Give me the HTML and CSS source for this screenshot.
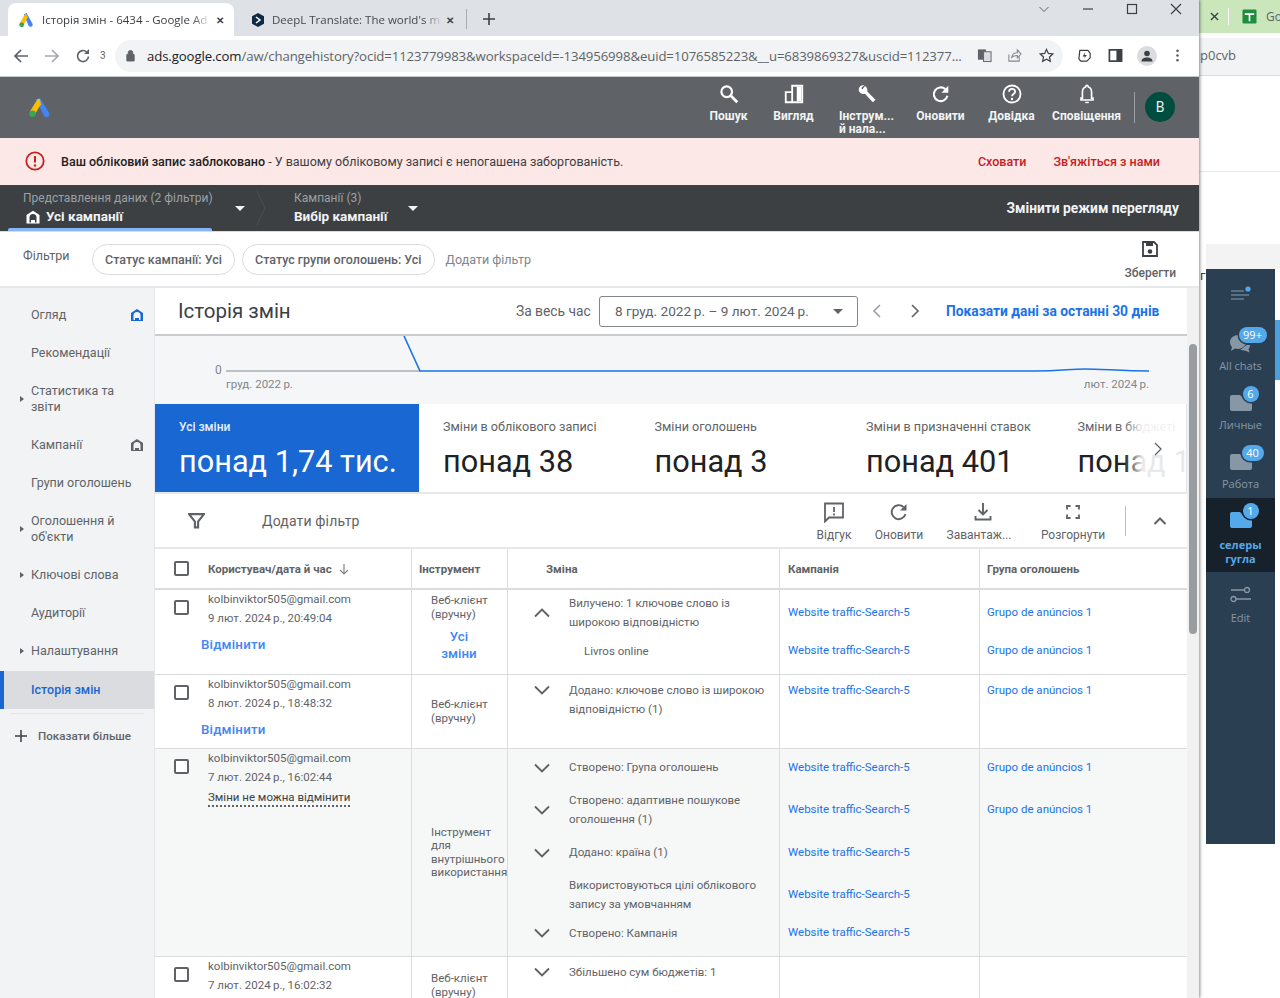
FILE: index.html
```html
<!DOCTYPE html>
<html lang="uk">
<head>
<meta charset="utf-8">
<title>Історія змін</title>
<link rel="stylesheet" href="styles.css">
</head>
<body>
<div class="browser">
  <div class="tabstrip">
    <div class="tab active-tab">
      <svg class="fav" viewBox="0 0 16 16"><path d="M5.700 2.200 8.600 1l5.900 10.700c.6 1.200-.1 2.600-1.300 3-1 .3-2-.1-2.600-1z" fill="#4285f4"/><path d="M7.200 2 1.900 11l3.600 2L9.800 5.400 8.700 2.500z" fill="#fbbc04"/><circle cx="3.700" cy="12.800" r="2.400" fill="#34a853"/></svg>
      <span class="tab-title">Історія змін - 6434 - Google Ad</span>
      <span class="tab-x">✕</span>
    </div>
    <div class="tab tab-two">
      <svg class="fav" viewBox="0 0 16 16"><path d="M8 1 14 4.300V11.700L8 15 2 11.700V4.300z" fill="#0f2b46"/><path d="M6 5l4 3-4 3" fill="none" stroke="#fff" stroke-width="1.500"/></svg>
      <span class="tab-title">DeepL Translate: The world's mo</span>
      <span class="tab-x">✕</span>
    </div>
    <span class="tab-sep"></span>
    <svg class="newtab" viewBox="0 0 14 14"><path d="M7 1v12M1 7h12" stroke="#3c4043" stroke-width="1.600"/></svg>
    <div class="winctl">
      <svg viewBox="0 0 12 12"><path d="M1.500 4 6 8.500 10.500 4" fill="none" stroke="#5f6368" stroke-width="1"/></svg>
      <svg viewBox="0 0 12 12"><path d="M1 6h10" stroke="#3c4043" stroke-width="1.200"/></svg>
      <svg viewBox="0 0 12 12"><rect x="1.500" y="1.500" width="9" height="9" fill="none" stroke="#3c4043" stroke-width="1.200"/></svg>
      <svg viewBox="0 0 12 12"><path d="M1 1l10 10M11 1 1 11" stroke="#3c4043" stroke-width="1.200"/></svg>
    </div>
  </div>
  <div class="omnirow">
    <svg class="nav-ic" viewBox="0 0 16 16"><path d="M15 8H2M8 2 2 8l6 6" fill="none" stroke="#5f6368" stroke-width="1.700"/></svg>
    <svg class="nav-ic" viewBox="0 0 16 16"><path d="M1 8h13M8 2l6 6-6 6" fill="none" stroke="#a5a8ac" stroke-width="1.700"/></svg>
    <svg class="nav-ic" viewBox="0 0 16 16"><path d="M13.500 8.500A5.500 5.500 0 1 1 11.800 4" fill="none" stroke="#5f6368" stroke-width="1.700"/><path d="M14 1v5H9z" fill="#5f6368"/></svg>
    <span class="reload-count">3</span>
    <div class="omnibox">
      <svg class="lock" viewBox="0 0 12 14"><path d="M2 6h8v7H2zM3.500 6V4a2.500 2.500 0 0 1 5 0v2" fill="#5f6368" stroke="#5f6368"/></svg>
      <span class="url"><b>ads.google.com</b>/aw/changehistory?ocid=1123779983&amp;workspaceId=-134956998&amp;euid=1076585223&amp;__u=6839869327&amp;uscid=112377...</span>
      <svg class="omni-ic" viewBox="0 0 16 16"><rect x="1" y="1.500" width="8.500" height="11" fill="#5f6368"/><rect x="7" y="4" width="8" height="10.500" fill="#dadce0" stroke="#5f6368"/></svg>
      <svg class="omni-ic" viewBox="0 0 16 16"><path d="M2 7v7h11V9M5 10c.5-3.500 3-5 6-5V2l4 4.500-4 4V8c-2.500 0-4.500.5-6 2z" fill="none" stroke="#80868b" stroke-width="1.100"/></svg>
      <svg class="omni-ic star" viewBox="0 0 16 16"><path d="m8 1.500 2 4.300 4.700.6-3.500 3.200.9 4.700L8 12l-4.100 2.300.9-4.700L1.300 6.400 6 5.800z" fill="none" stroke="#3c4043" stroke-width="1.300"/></svg>
    </div>
    <div class="omni-right">
      <svg class="omni-ic" viewBox="0 0 16 16"><path d="M3 2.500h8.500l2.500 3v5l-3.500 3.500H4L2 11.500z" fill="none" stroke="#3c4043" stroke-width="1.300"/><path d="M9 4 6 9h2.500L7 12l3.500-4.500H8z" fill="#3c4043"/></svg>
      <svg class="omni-ic" viewBox="0 0 16 16"><rect x="1.500" y="2" width="13" height="12" fill="none" stroke="#3c4043" stroke-width="1.800"/><rect x="9" y="2" width="5.500" height="12" fill="#3c4043"/></svg>
      <span class="profile"><svg viewBox="0 0 16 16"><circle cx="8" cy="5.500" r="2.800" fill="#3c4043"/><path d="M2.500 13.500c0-3 2.500-4 5.500-4s5.500 1 5.500 4z" fill="#3c4043"/></svg></span>
      <svg class="omni-ic" viewBox="0 0 16 16"><circle cx="8" cy="3" r="1.400" fill="#5f6368"/><circle cx="8" cy="8" r="1.400" fill="#5f6368"/><circle cx="8" cy="13" r="1.400" fill="#5f6368"/></svg>
    </div>
  </div>

  <header class="adsbar">
    <svg class="ads-logo" viewBox="0 0 24 22"><path d="M8 2.500 12.500 1l9.500 15.500c.9 1.800.2 3.800-1.600 4.500-1.500.5-3-.1-3.800-1.500z" fill="#4285f4"/><path d="M10 2 1.800 15.500l5 3L13.600 7.500 12.300 2z" fill="#fbbc04"/><circle cx="4.700" cy="17.500" r="3.400" fill="#34a853"/></svg>
    <nav class="ads-actions">
      <div class="act w-search"><svg viewBox="0 0 24 24"><circle cx="9.500" cy="9.500" r="5.800" fill="none" stroke="#fff" stroke-width="2.400"/><path d="m14 14 7 7" stroke="#fff" stroke-width="3"/></svg><span>Пошук</span></div>
      <div class="act w-view"><svg viewBox="0 0 24 24"><path d="M3 10h7V3h11v18H3zM10 10v11" fill="none" stroke="#fff" stroke-width="2"/><path d="M15 4h5v16h-5z" fill="#fff"/></svg><span>Вигляд</span></div>
      <div class="act w-tools"><svg viewBox="0 0 24 24"><path d="M9 2.500c-3-.8-6 1.500-6 4.500 0 1 .2 1.600.5 2.300 1.300 2.500 4 3.300 6.300 2.300l8.500 9.500 3-2.800-9-9c.6-2.200-.2-4.800-2.500-6L7 7.200 5.800 5.500z" fill="#fff"/></svg><span>Інструм... й нала...</span></div>
      <div class="act w-refresh"><svg viewBox="0 0 24 24"><path d="M19 14a7.500 7.500 0 1 1-2.300-7.300" fill="none" stroke="#fff" stroke-width="2.300"/><path d="M20 3v7.500h-7.500z" fill="#fff"/></svg><span>Оновити</span></div>
      <div class="act w-help"><svg viewBox="0 0 24 24"><circle cx="12" cy="12" r="9.300" fill="none" stroke="#fff" stroke-width="2"/><path d="M8.800 9.500c0-4.200 6.600-4.200 6.600 0 0 2.500-3.400 2.600-3.400 5" fill="none" stroke="#fff" stroke-width="2"/><circle cx="12" cy="17.500" r="1.300" fill="#fff"/></svg><span>Довідка</span></div>
      <div class="act w-bell"><svg viewBox="0 0 24 24"><path d="M12 2.500c-.8 0-1.300.6-1.300 1.500C8 5 7 7 7 10v6.500H5.500v2h13v-2H17V10c0-3-1-5-3.700-6 0-.9-.5-1.500-1.300-1.500z" fill="none" stroke="#fff" stroke-width="1.800"/><path d="M10 20.500h4v1.500h-4z" fill="#fff"/></svg><span>Сповіщення</span></div>
      <span class="act-sep"></span>
      <span class="avatar">B</span>
    </nav>
  </header>

  <div class="banner">
    <svg class="alert" viewBox="0 0 20 20"><circle cx="10" cy="10" r="8.700" fill="none" stroke="#c5221f" stroke-width="1.800"/><path d="M10 5v6.500" stroke="#c5221f" stroke-width="2"/><circle cx="10" cy="14.500" r="1.200" fill="#c5221f"/></svg>
    <span class="banner-text"><b>Ваш обліковий запис заблоковано</b> - У вашому обліковому записі є непогашена заборгованість.</span>
    <a class="banner-link hide">Сховати</a>
    <a class="banner-link">Зв'яжіться з нами</a>
  </div>

  <div class="scopebar">
    <div class="scope scope-first">
      <div class="scope-txt">
        <small>Представлення даних (2 фільтри)</small>
        <strong><svg class="home" viewBox="0 0 14 14"><path d="M7 .8 13.500 5v8.500H.5V5z" fill="#fff"/><path d="M3.500 12.500V7.500a3.500 3.500 0 0 1 7 0v5z" fill="#3c4043"/><path d="M5 13h4v-3H5z" fill="#fff"/></svg>Усі кампанії</strong>
      </div>
      <i class="tri"></i>
    </div>
    <svg class="crumb" viewBox="0 0 10 46"><path d="M1 6l8 17-8 17" fill="none" stroke="#4d5156"/></svg>
    <div class="scope scope-second">
      <div class="scope-txt">
        <small>Кампанії (3)</small>
        <strong>Вибір кампанії</strong>
      </div>
      <i class="tri"></i>
    </div>
    <span class="scope-mode">Змінити режим перегляду</span>
  </div>

  <div class="filterbar">
    <span class="filter-label">Фільтри</span>
    <span class="chip">Статус кампанії: Усі</span>
    <span class="chip">Статус групи оголошень: Усі</span>
    <span class="add-filter">Додати фільтр</span>
    <div class="save">
      <svg viewBox="0 0 18 18"><path d="M2 2h11l3 3v11H2z" fill="none" stroke="#3c4043" stroke-width="1.800"/><rect x="5" y="2" width="7" height="4" fill="#3c4043"/><circle cx="9" cy="11.500" r="2.300" fill="#3c4043"/></svg>
      <span>Зберегти</span>
    </div>
  </div>

  <div class="workspace">
    <aside class="sidenav">
      <div class="item">Огляд<svg class="home-ic" viewBox="0 0 14 14"><path d="M7 1 13 5v8H1V5z" fill="#1967d2"/><path d="M3.500 12V7.500a3.500 3.500 0 0 1 7 0V12z" fill="#f1f3f4"/><path d="M5 13h4v-3H5z" fill="#1967d2"/></svg></div>
      <div class="item">Рекомендації</div>
      <div class="item caret">Статистика та звіти</div>
      <div class="item">Кампанії<svg class="home-ic" viewBox="0 0 14 14"><path d="M7 1 13 5v8H1V5z" fill="#5f6368"/><path d="M3.500 12V7.500a3.500 3.500 0 0 1 7 0V12z" fill="#f1f3f4"/><path d="M5 13h4v-3H5z" fill="#5f6368"/></svg></div>
      <div class="item">Групи оголошень</div>
      <div class="item caret">Оголошення й об'єкти</div>
      <div class="item caret">Ключові слова</div>
      <div class="item">Аудиторії</div>
      <div class="item caret">Налаштування</div>
      <div class="item current">Історія змін</div>
      <div class="more"><svg viewBox="0 0 14 14"><path d="M7 1v12M1 7h12" stroke="#3c4043" stroke-width="1.500"/></svg>Показати більше</div>
    </aside>

    <main class="content">
      <div class="titlerow">
        <h1>Історія змін</h1>
        <span class="range-label">За весь час</span>
        <div class="range"><span>8 груд. 2022&#8201;р. – 9 лют. 2024&#8201;р.</span><i class="tri dark"></i></div>
        <svg class="pager" viewBox="0 0 10 16"><path d="M8 2 2 8l6 6" fill="none" stroke="#9aa0a6" stroke-width="1.600"/></svg>
        <svg class="pager" viewBox="0 0 10 16"><path d="m2 2 6 6-6 6" fill="none" stroke="#5f6368" stroke-width="1.600"/></svg>
        <a class="last30">Показати дані за останні 30 днів</a>
      </div>

      <div class="chart">
        <svg class="chart-svg" viewBox="0 0 1032 68"><path d="M71 35h194" stroke="#aaaeb2" stroke-width="1.500"/><path d="M249 0l16 35H880C905 35 915 33 930 33S970 35 994 35" fill="none" stroke="#1a73e8" stroke-width="1.600"/></svg>
        <span class="chart-zero">0</span>
        <div class="chart-labels"><span>груд. 2022&#8201;р.</span><span>лют. 2024&#8201;р.</span></div>
      </div>

      <div class="scorecards">
        <div class="card card-on"><small>Усі зміни</small><b>понад 1,74 тис.</b></div>
        <div class="card"><small>Зміни в облікового записі</small><b>понад 38</b></div>
        <div class="card"><small>Зміни оголошень</small><b>понад 3</b></div>
        <div class="card"><small>Зміни в призначенні ставок</small><b>понад 401</b></div>
        <div class="card card-last"><small>Зміни в бюджеті</small><b>понад 1</b></div>
        <span class="fade"></span>
        <svg class="cards-next" viewBox="0 0 10 16"><path d="m2 2 6 6-6 6" fill="none" stroke="#5f6368" stroke-width="1.300"/></svg>
      </div>

      <div class="tabletools">
        <svg class="funnel" viewBox="0 0 16 16"><path d="M1 2h14L9.500 9v5.500h-3V9z" fill="none" stroke="#5f6368" stroke-width="2"/></svg>
        <span class="tool-add">Додати фільтр</span>
        <div class="tool t-fb"><svg viewBox="0 0 22 22"><path d="M2 2.500h18v14H6l-4 4z" fill="none" stroke="#5f6368" stroke-width="1.800"/><path d="M11 6v5M11 12.500v2" stroke="#5f6368" stroke-width="1.800"/></svg><span>Відгук</span></div>
        <div class="tool t-rf"><svg viewBox="0 0 22 22"><path d="M17.500 13a7 7 0 1 1-2-7" fill="none" stroke="#5f6368" stroke-width="1.900"/><path d="M18.500 3v6.500H12z" fill="#5f6368"/></svg><span>Оновити</span></div>
        <div class="tool t-dl"><svg viewBox="0 0 22 22"><path d="M11 2v11M6.500 9l4.500 4.500L15.500 9M3.500 15v3.500h15V15" fill="none" stroke="#5f6368" stroke-width="1.900"/></svg><span>Завантаж...</span></div>
        <div class="tool t-ex"><svg viewBox="0 0 22 22"><path d="M5 8.500V5h3.500M13.500 5H17v3.500M17 13.500V17h-3.500M8.500 17H5v-3.500" fill="none" stroke="#5f6368" stroke-width="1.800"/></svg><span>Розгорнути</span></div>
        <span class="tool-sep"></span>
        <svg class="collapse" viewBox="0 0 14 10"><path d="m1.500 8 5.500-5.500L12.500 8" fill="none" stroke="#5f6368" stroke-width="2"/></svg>
      </div>

      <div class="grid head">
        <div class="cell c-user"><span class="check"></span><b>Користувач/дата й час</b><svg class="sort" viewBox="0 0 12 12"><path d="M6 1v10M2 7l4 4 4-4" fill="none" stroke="#80868b" stroke-width="1.200"/></svg></div>
        <div class="cell"><b class="h-tool">Інструмент</b></div>
        <div class="cell"><b class="h-change">Зміна</b></div>
        <div class="cell"><b class="h-camp">Кампанія</b></div>
        <div class="cell"><b class="h-link">Група оголошень</b></div>
      </div>

      <div class="grid row r1">
        <div class="cell c-user"><span class="check"></span><div class="who"><span>kolbinviktor505@gmail.com</span><span>9 лют. 2024&#8201;р., 20:49:04</span><a class="undo">Відмінити</a></div></div>
        <div class="cell tool-cell"><span class="tool-text top">Веб-клієнт (вручну)</span><a class="allchanges">Усі зміни</a></div>
        <div class="cell changes">
          <div class="chg h46"><svg class="chev" viewBox="0 0 16 10"><path d="m1 8.500 7-7 7 7" fill="none" stroke="#5f6368" stroke-width="1.900"/></svg><span>Вилучено: 1 ключове слово із широкою відповідністю</span></div>
          <div class="chg h30"><span class="sub">Livros online</span></div>
        </div>
        <div class="cell links"><a class="h46">Website traffic-Search-5</a><a class="h30">Website traffic-Search-5</a></div>
        <div class="cell links"><a class="h46">Grupo de anúncios 1</a><a class="h30">Grupo de anúncios 1</a></div>
      </div>

      <div class="grid row r2">
        <div class="cell c-user"><span class="check"></span><div class="who"><span>kolbinviktor505@gmail.com</span><span>8 лют. 2024&#8201;р., 18:48:32</span><a class="undo">Відмінити</a></div></div>
        <div class="cell tool-cell mid"><span class="tool-text">Веб-клієнт (вручну)</span></div>
        <div class="cell changes">
          <div class="chg top-chg"><svg class="chev" viewBox="0 0 16 10"><path d="m1 1.500 7 7 7-7" fill="none" stroke="#5f6368" stroke-width="1.900"/></svg><span class="long-line">Додано: ключове слово із широкою<br>відповідністю (1)</span></div>
        </div>
        <div class="cell links"><a class="h30">Website traffic-Search-5</a></div>
        <div class="cell links"><a class="h30">Grupo de anúncios 1</a></div>
      </div>

      <div class="grid row r3">
        <div class="cell c-user"><span class="check"></span><div class="who"><span>kolbinviktor505@gmail.com</span><span>7 лют. 2024&#8201;р., 16:02:44</span><span class="dotted">Зміни не можна відмінити</span></div></div>
        <div class="cell tool-cell mid"><span class="tool-text wide">Інструмент для внутрішнього використання</span></div>
        <div class="cell changes">
          <div class="chg h37"><svg class="chev" viewBox="0 0 16 10"><path d="m1 1.500 7 7 7-7" fill="none" stroke="#5f6368" stroke-width="1.900"/></svg><span>Створено: Група оголошень</span></div>
          <div class="chg h47"><svg class="chev" viewBox="0 0 16 10"><path d="m1 1.500 7 7 7-7" fill="none" stroke="#5f6368" stroke-width="1.900"/></svg><span>Створено: адаптивне пошукове оголошення (1)</span></div>
          <div class="chg h39"><svg class="chev" viewBox="0 0 16 10"><path d="m1 1.500 7 7 7-7" fill="none" stroke="#5f6368" stroke-width="1.900"/></svg><span>Додано: країна (1)</span></div>
          <div class="chg h46"><i class="chev-gap"></i><span>Використовуються цілі облікового запису за умовчанням</span></div>
          <div class="chg h30"><svg class="chev" viewBox="0 0 16 10"><path d="m1 1.500 7 7 7-7" fill="none" stroke="#5f6368" stroke-width="1.900"/></svg><span>Створено: Кампанія</span></div>
        </div>
        <div class="cell links"><a class="h38">Website traffic-Search-5</a><a class="h46">Website traffic-Search-5</a><a class="h40">Website traffic-Search-5</a><a class="h44">Website traffic-Search-5</a><a class="h32">Website traffic-Search-5</a></div>
        <div class="cell links"><a class="h38">Grupo de anúncios 1</a><a class="h46">Grupo de anúncios 1</a></div>
      </div>

      <div class="grid row r4">
        <div class="cell c-user"><span class="check"></span><div class="who"><span>kolbinviktor505@gmail.com</span><span>7 лют. 2024&#8201;р., 16:02:32</span></div></div>
        <div class="cell tool-cell r4-tool"><span class="tool-text">Веб-клієнт (вручну)</span></div>
        <div class="cell changes">
          <div class="chg top-chg"><svg class="chev" viewBox="0 0 16 10"><path d="m1 1.500 7 7 7-7" fill="none" stroke="#5f6368" stroke-width="1.900"/></svg><span>Збільшено сум бюджетів: 1</span></div>
        </div>
        <div class="cell links"></div>
        <div class="cell links"></div>
      </div>
    </main>
    <div class="scrolltrack"><span class="thumb"></span></div>
  </div>
</div>

<aside class="backdrop">
  <div class="back-tabs">
    <svg class="back-x" viewBox="0 0 10 10"><path d="m1 1 8 8M9 1 1 9" stroke="#3c4043" stroke-width="1.500"/></svg>
    <span class="back-sep"></span>
    <svg class="sheet" viewBox="0 0 16 16"><rect x="0.500" y="0.500" width="15" height="15" rx="1.500" fill="#1e8e3e"/><path d="M3 5.500h10M8 5.500V13" stroke="#fff" stroke-width="1.800"/></svg>
    <span class="back-go">Go</span>
  </div>
  <div class="back-url">p0cvb</div>
  <div class="back-rule"></div>
  <div class="chat-top"></div>
  <span class="back-glyph">г</span>
  <div class="chatpanel">
    <div class="chat-menu"><svg viewBox="0 0 22 16"><path d="M1 5h13M1 9h18M1 13h13" stroke="#6b7f92" stroke-width="1.300"/><circle cx="18" cy="3" r="2.600" fill="#54a9eb"/></svg></div>
    <div class="folder f-all"><span class="fi"><svg viewBox="0 0 26 22"><path d="M2 9c0-4 4-7 8-7s8 3 8 7-4 7-8 7c-1 0-2-.2-3-.5L3 18l1-4C3 13 2 11 2 9z" fill="#8797a6"/><path d="M22 12c0 2-.8 3-1.500 4l1 3.500-4-1.700-5-.8 6-5z" fill="#8797a6"/></svg><em class="badge wide-b">99+</em></span><label>All chats</label></div>
    <div class="folder f-b"><span class="fi"><svg viewBox="0 0 24 18"><path d="M3 1H11L18 8H21a2 2 0 0 1 2 2v5a2 2 0 0 1-2 2H3a2 2 0 0 1-2-2V3a2 2 0 0 1 2-2z" fill="#8797a6"/></svg><em class="badge">6</em></span><label>Личные</label></div>
    <div class="folder f-b"><span class="fi"><svg viewBox="0 0 24 18"><path d="M3 1H11L18 8H21a2 2 0 0 1 2 2v5a2 2 0 0 1-2 2H3a2 2 0 0 1-2-2V3a2 2 0 0 1 2-2z" fill="#8797a6"/></svg><em class="badge mid-b">40</em></span><label>Работа</label></div>
    <div class="folder f-on"><span class="fi"><svg viewBox="0 0 24 18"><path d="M3 1H11L18 8H21a2 2 0 0 1 2 2v5a2 2 0 0 1-2 2H3a2 2 0 0 1-2-2V3a2 2 0 0 1 2-2z" fill="#54a9eb"/></svg><em class="badge on-b">1</em></span><label>селеры<br>гугла</label></div>
    <div class="folder f-edit"><span class="fi"><svg viewBox="0 0 22 20"><path d="M1 5h13M6 14h15" stroke="#8797a6" stroke-width="1.300"/><circle cx="17" cy="5" r="2.500" fill="none" stroke="#8797a6" stroke-width="1.300"/><circle cx="3.500" cy="14" r="2.500" fill="none" stroke="#8797a6" stroke-width="1.300"/></svg></span><label>Edit</label></div>
  </div>
  <span class="chat-sliver"></span>
</aside>
</body>
</html>
```

FILE: styles.css
```css
* { box-sizing: border-box; }
html, body { margin: 0; height: 998px; overflow: hidden; }
body { display: flex; width: 1280px; background: #fff; font-family: Roboto, "Liberation Sans", sans-serif; color: #3c4043; }
a { color: #1a73e8; }
svg { display: block; flex: none; }

.browser { width: 1199px; height: 998px; flex: none; display: flex; flex-direction: column; overflow: hidden; position: relative; box-shadow: 1px 0 3px rgba(0,0,0,.45); z-index: 2; }

.tabstrip { height: 36px; flex: none; background: #dee1e6; display: flex; align-items: flex-end; padding-left: 8px; }
.tab { display: flex; align-items: center; height: 33px; font: 11.500px "Open Sans", "Noto Sans", sans-serif; color: #45494d; }
.active-tab { width: 226px; padding: 0 6px 0 10px; gap: 8px; background: #fff; border-radius: 8px 8px 0 0; color: #3c4043; }
.tab-two { width: 232px; padding: 0 8px 0 16px; gap: 6px; }
.fav { width: 16px; height: 16px; }
.tab-title { flex: 1; min-width: 0; white-space: nowrap; -webkit-mask-image: linear-gradient(90deg,#000 90%,rgba(0,0,0,.15)); mask-image: linear-gradient(90deg,#000 90%,rgba(0,0,0,.15)); }
.tab-x { font-size: 10px; font-weight: 700; color: #3c4043; width: 12px; }
.tab-sep { width: 1px; height: 20px; background: #a9acb2; margin-bottom: 7px; }
.newtab { width: 14px; height: 14px; margin: 0 0 10px 15px; }
.winctl { margin-left: auto; align-self: flex-start; display: flex; gap: 32px; padding: 3px 17px 0 0; }
.winctl svg { width: 12px; height: 12px; }

.omnirow { height: 41px; flex: none; background: #fff; display: flex; align-items: center; padding: 0 0 1px 13px; border-bottom: 1px solid #c4c6c9; }
.nav-ic { width: 16px; height: 16px; margin-right: 15px; }
.reload-count { font-size: 10px; color: #5f6368; margin-left: -6px; width: 15px; }
.omnibox { width: 948px; height: 32px; background: #f1f3f4; border-radius: 16px; display: flex; align-items: center; padding: 0 8px 0 10px; }
.lock { width: 11px; height: 13px; margin-right: 11px; }
.url { font: 13.200px "Open Sans", "Noto Sans", sans-serif; color: #5f6368; white-space: nowrap; width: 815px; letter-spacing: -.11px; }
.url b { font-weight: 400; color: #202124; }
.omni-ic { width: 15px; height: 15px; margin-left: 15px; }
.omni-ic.star { margin-left: 17px; }
.omni-right { display: flex; align-items: center; gap: 16px; padding-left: 14px; }
.omni-right .omni-ic { margin-left: 0; }
.profile { width: 20px; height: 20px; border-radius: 50%; background: #dadce0; padding: 2px; margin: 0 -2.500px; }

.adsbar { height: 61px; flex: none; background: #5f6368; display: flex; align-items: center; padding: 0 0 0 28px; }
.ads-logo { width: 23px; height: 21px; }
.ads-actions { margin-left: auto; display: flex; align-items: flex-start; height: 61px; padding-top: 6px; }
.act { display: flex; flex-direction: column; align-items: center; font-size: 12px; font-weight: 700; line-height: 13px; color: #f1f3f4; gap: 5px; text-align: center; }
.act svg { width: 22px; height: 22px; }
.w-search { width: 53px; }
.w-view { width: 77px; }
.w-tools { width: 70px; }
.w-tools span { width: 56px; text-align: left; }
.w-refresh { width: 77px; }
.w-help { width: 65px; }
.w-bell { width: 85px; }
.act-sep { width: 1px; height: 31px; background: #9aa0a6; margin: 9px 10px 0 5px; }
.avatar { width: 30px; height: 30px; border-radius: 50%; background: #004d40; color: #e8f0ee; font-size: 14px; display: flex; align-items: center; justify-content: center; margin: 9px 24px 0 0; }

.banner { height: 47px; flex: none; background: #fce8e6; display: flex; align-items: center; padding: 0 39px 1px 25px; font-size: 12.500px; color: #3c4043; }
.alert { width: 20px; height: 20px; margin-right: 16px; }
.banner-text b { font-weight: 500; color: #202124; }
.banner-link { color: #c5221f; font-size: 12.500px; font-weight: 500; }
.hide { margin: 0 27px 0 auto; }

.scopebar { height: 46px; flex: none; background: #3c4043; display: flex; align-items: center; position: relative; color: #fff; }
.scope { display: flex; align-items: center; height: 46px; }
.scope-first { width: 256px; padding-left: 23px; position: relative; }
.scope-first::after { content: ""; position: absolute; left: 8px; width: 204px; bottom: 0; height: 3px; background: #8ab4f8; border-radius: 2px 2px 0 0; }
.scope-second { padding-left: 28px; }
.scope-txt { display: flex; flex-direction: column; gap: 2px; }
.scope-txt small { font-size: 12px; color: #9aa0a6; line-height: 15px; }
.scope-txt strong { font-size: 13.500px; font-weight: 700; color: #f1f3f4; line-height: 17px; display: flex; align-items: center; gap: 6px; }
.home { width: 14px; height: 14px; margin-left: 3px; }
.tri { width: 0; height: 0; border-left: 5.500px solid transparent; border-right: 5.500px solid transparent; border-top: 5.500px solid #f1f3f4; }
.scope-first .tri { margin-left: 22px; }
.scope-second .tri { margin-left: 21px; }
.crumb { width: 10px; height: 46px; }
.scope-mode { margin-left: auto; margin-right: 20px; font-size: 13.800px; font-weight: 700; color: #f1f3f4; }

.filterbar { height: 57px; flex: none; background: #fff; border-top: 1px solid #dadce0; border-bottom: 2px solid #e6e8ea; display: flex; align-items: center; padding: 1px 23px 0; font-size: 12.500px; }
.filter-label { color: #5f6368; width: 69px; margin-top: -9px; }
.chip { height: 31px; border: 1px solid #dadce0; border-radius: 16px; padding: 0 12px; display: flex; align-items: center; color: #5f6368; font-weight: 500; margin-right: 7px; white-space: nowrap; }
.add-filter { color: #80868b; margin-left: 4px; }
.save { margin-left: auto; display: flex; flex-direction: column; align-items: center; gap: 8px; font-size: 12px; line-height: 14px; color: #5f6368; font-weight: 500; padding-top: 1px; }
.save svg { width: 18px; height: 18px; }

.workspace { flex: 1; min-height: 0; display: flex; }
.sidenav { width: 155px; flex: none; background: #f1f3f4; border-right: 1px solid #e3e5e8; padding-top: 8px; font-size: 12.500px; color: #5f6368; }
.item { position: relative; padding: 11px 16px 11px 31px; line-height: 16px; }
.caret::before { content: ""; position: absolute; left: 20px; top: 50%; margin-top: -3px; border-left: 4px solid #5f6368; border-top: 3px solid transparent; border-bottom: 3px solid transparent; }
.home-ic { position: absolute; right: 10px; top: 12px; width: 14px; height: 14px; }
.current { color: #1967d2; font-weight: 500; background: #dadce0; border-left: 4px solid #1967d2; padding-left: 27px; margin-top: 1px; }
.more { margin: 4px 10px 0 10px; border-top: 1px solid #e3e5e8; padding: 15px 0 0 4px; display: flex; align-items: center; gap: 10px; font-size: 11.600px; font-weight: 500; color: #5f6368; white-space: nowrap; }
.more svg { width: 14px; height: 14px; }

.content { width: 1032px; flex: none; background: #fff; overflow: hidden; }
.titlerow { height: 48px; display: flex; align-items: center; padding: 0 27px 0 23px; border-bottom: 2px solid #c9cbce; }
h1 { margin: 0; font-size: 20.500px; font-weight: 400; color: #3c4043; width: 338px; white-space: nowrap; }
.range-label { font-size: 13.800px; color: #5f6368; width: 83px; white-space: nowrap; }
.range { width: 259px; height: 31px; border: 1px solid #80868b; border-radius: 3px; display: flex; align-items: center; justify-content: space-between; padding: 0 14px 0 15px; font-size: 13.600px; color: #5f6368; white-space: nowrap; }
.tri.dark { border-top-color: #5f6368; }
.pager { width: 10px; height: 16px; margin-left: 14px; }
.pager + .pager { margin-left: 28px; margin-right: 26px; }
.last30 { font-size: 13.800px; font-weight: 700; color: #1a73e8; white-space: nowrap; }

.chart { height: 68px; position: relative; background: #f5f6f7; }
.chart-svg { width: 1032px; height: 68px; }
.chart-zero { position: absolute; left: 60px; top: 27px; font-size: 12px; color: #80868b; }
.chart-labels { position: absolute; left: 71px; right: 38px; top: 41px; display: flex; justify-content: space-between; font-size: 11.500px; color: #80868b; }

.scorecards { height: 90px; display: flex; position: relative; overflow: hidden; border-bottom: 2px solid #e6e8ea; border-right: 1px solid #e3e5e8; }
.card { width: 211.500px; flex: none; padding: 16px 0 0 24px; color: #3c4043; }
.card small { display: block; font-size: 12.600px; line-height: 14px; color: #5f6368; white-space: nowrap; }
.card b { display: block; font-size: 30.700px; font-weight: 400; line-height: 38px; margin-top: 9px; color: #202124; white-space: nowrap; }
.card-on { width: 264px; background: #1967d2; padding-left: 24px; }
.card-on small { color: #e8f0fe; font-weight: 500; font-size: 12px; }
.card-on b { color: #fff; }
.card-last { width: 110px; }
.fade { position: absolute; right: 0; top: 0; bottom: 0; width: 62px; background: linear-gradient(90deg, rgba(255,255,255,0), rgba(255,255,255,.9) 30%); }
.cards-next { position: absolute; right: 23px; top: 37px; width: 10px; height: 16px; }

.tabletools { height: 55px; display: flex; align-items: center; padding-left: 33px; border-bottom: 2px solid #e6e8ea; }
.funnel { width: 17px; height: 17px; }
.tool-add { font-size: 14px; letter-spacing: .15px; color: #5f6368; margin-left: 57px; margin-right: auto; }
.tool { display: flex; flex-direction: column; align-items: center; gap: 5px; font-size: 12px; line-height: 14px; color: #5f6368; white-space: nowrap; padding-top: 1px; }
.tool svg { width: 22px; height: 22px; }
.t-fb { width: 50px; }
.t-rf { width: 80px; }
.t-dl { width: 88px; }
.t-dl span { margin-right: 8px; }
.t-ex { width: 92px; }
.tool-sep { width: 1px; height: 30px; background: #bdc1c6; margin: 0 27px 0 6px; }
.collapse { width: 14px; height: 10px; margin-right: 20px; }

.grid { display: grid; grid-template-columns: 257px 96px 272px 200px 207px; width: 1032px; border-bottom: 1px solid #dadce0; }
.cell { border-right: 1px solid #dadce0; min-width: 0; }
.cell:last-child { border-right: 0; }
.head { height: 41px; border-bottom: 2px solid #dadce0; font-size: 11.500px; }
.head .cell { display: flex; align-items: center; }
.head b { font-weight: 700; color: #5f6368; white-space: nowrap; }
.c-user { display: flex; padding-left: 19px; }
.head .c-user .check { margin-top: 0; }
.check { width: 15px; height: 15px; border: 2px solid #5f6368; border-radius: 2px; flex: none; margin-top: 10px; background: #fff; }
.head .c-user b { margin-left: 19px; }
.sort { width: 12px; height: 12px; margin-left: 6px; }
.h-tool { margin-left: 7px; }
.h-change { margin-left: 38px; }
.h-camp { margin-left: 8px; }
.h-link { margin-left: 7px; }

.row { font-size: 11.500px; color: #5f6368; }
.r1 { height: 85px; }
.r2 { height: 74px; }
.r3 { height: 208px; background: #f6f7f7; }
.r4 { height: 60px; }
.who { display: flex; flex-direction: column; margin-left: 19px; line-height: 19px; }
.who span { white-space: nowrap; }
.undo { font-size: 13.300px; color: #4285f4; font-weight: 500; margin: 7px 0 0 -7px; letter-spacing: .2px; }
.dotted { color: #3c4043; border-bottom: 2px dotted #5f6368; line-height: 15px; margin-top: 3px; align-self: flex-start; }
.tool-cell { display: flex; flex-direction: column; padding-left: 19px; line-height: 13.500px; }
.tool-cell.mid { justify-content: center; }
.r4-tool { padding-top: 15px; }
.tool-text { display: block; }
.tool-text.top { padding-top: 4px; }
.tool-text.wide { width: 76px; line-height: 13.500px; }
.allchanges { display: block; color: #4285f4; font-size: 13.300px; font-weight: 500; line-height: 17px; text-align: center; width: 56px; margin-top: 7px; }
.chg { display: flex; align-items: center; padding: 0 14px 0 26px; line-height: 19px; }
.chg span { flex: 1; }
.chev { width: 16px; height: 10px; margin-right: 19px; }
.chev-gap { width: 16px; margin-right: 19px; flex: none; }
.top-chg { align-items: flex-start; padding-top: 6px; }
.top-chg .chev { margin-top: 4px; }
.chg .long-line { white-space: nowrap; }
.h47 { height: 47px; }
.h46 { height: 46px; }
.h44 { height: 44px; }
.h40 { height: 40px; }
.h39 { height: 39px; }
.h38 { height: 38px; }
.h37 { height: 37px; }
.h32 { height: 32px; }
.h30 { height: 30px; }
.chg .sub { flex: 1; padding-left: 50px; }
.links { display: flex; flex-direction: column; padding-left: 8px; margin-top: -1px; }
.links:last-child { padding-left: 7px; }
.links a { display: flex; align-items: center; font-size: 11.500px; color: #1a73e8; }
.r2 .links a { align-items: flex-start; padding-top: 9px; }

.scrolltrack { width: 12px; flex: none; background: #f1f1f1; padding: 56px 2px 0; }
.thumb { display: block; height: 290px; width: 8px; background: #9a9da0; border-radius: 4px; }

.backdrop { flex: 1; position: relative; background: #fff; }
.back-tabs { height: 33px; background: #c9e7bb; display: flex; align-items: center; padding-left: 11px; gap: 9px; overflow: hidden; }
.back-x { width: 9px; height: 9px; }
.back-sep { width: 1px; height: 17px; background: #fff; }
.sheet { width: 15px; height: 15px; margin-left: 4px; }
.back-go { font: 12px "Open Sans", sans-serif; color: #5f6368; }
.back-url { height: 38px; background: #f1f3f4; border-bottom: 1px solid #dadce0; margin-top: 5px; font: 13px "Open Sans", sans-serif; color: #5f6368; padding: 8px 0 0 1px; }
.back-rule { height: 1px; background: #e8e8e8; margin-top: 95px; }
.chat-top { position: absolute; left: 7px; top: 244px; width: 74px; height: 25px; background: #f3f3f3; }
.back-glyph { position: absolute; left: 1px; top: 268px; font-size: 13px; color: #3c4043; }
.chatpanel { position: absolute; left: 7px; top: 269px; width: 69px; height: 575px; background: #2b3f52; display: flex; flex-direction: column; padding-top: 14px; font: 11px "Open Sans", "Noto Sans", sans-serif; color: #8797a6; text-align: center; }
.chat-menu svg { width: 22px; height: 16px; margin: 3px auto 0 24px; }
.chat-menu { height: 32px; }
.folder { display: flex; flex-direction: column; align-items: center; }
.folder label { line-height: 14px; }
.fi { position: relative; display: block; }
.fi svg { width: 24px; height: 18px; }
.f-all { height: 64px; padding-top: 18px; gap: 4px; }
.f-all .fi svg { width: 26px; height: 22px; }
.f-b { height: 59px; padding-top: 15px; gap: 6px; }
.f-on { height: 74px; padding-top: 13px; gap: 9px; background: #17212b; color: #54a9eb; font-weight: 700; margin-top: 1px; }
.f-edit { padding-top: 13px; gap: 6px; }
.f-edit .fi svg { width: 22px; height: 20px; }
.badge { position: absolute; top: -8px; left: 14px; min-width: 16px; height: 16px; border-radius: 8px; background: #54a9eb; color: #fff; font-style: normal; font-weight: 400; font-size: 11px; line-height: 16px; padding: 0 2px; text-align: center; box-shadow: 0 0 0 1.500px #2b3f52; }
.on-b { box-shadow: 0 0 0 1.500px #17212b; }
.wide-b { width: 28px; left: 11px; top: -6px; }
.mid-b { width: 22px; left: 13px; }
.chat-sliver { position: absolute; left: 76px; top: 320px; width: 5px; height: 60px; background: #4a9fdc; }
```
